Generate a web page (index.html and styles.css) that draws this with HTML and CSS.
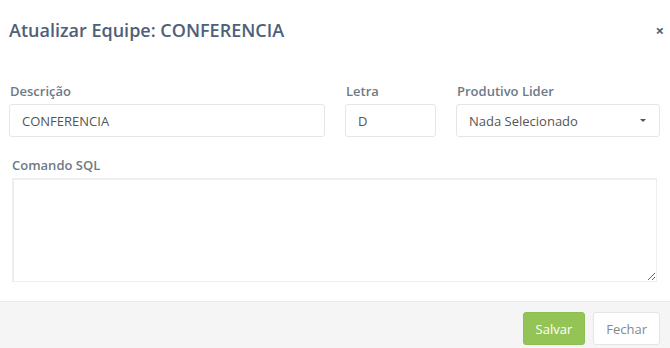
FILE: index.html
```html
<!DOCTYPE html>
<html>
<head>
  <meta charset="utf-8">
  <link rel="stylesheet" href="styles.css">
</head>
<body>

<div class="modal">
  <!-- Cabeçalho -->
  <div class="modal-header">
    <h4 class="modal-title">Atualizar Equipe: CONFERENCIA</h4>
    <span class="close">&times;</span>
  </div>

  <!-- Formulário -->
  <div class="modal-body">
    <div class="row">
      <div class="field">
        <label>Descrição</label>
        <input type="text" class="form-control" value="CONFERENCIA">
      </div>
      <div class="field">
        <label>Letra</label>
        <input type="text" class="form-control" value="D">
      </div>
      <div class="field">
        <label>Produtivo Lider</label>
        <div class="form-control select">
          <span>Nada Selecionado</span>
          <span class="caret"></span>
        </div>
      </div>
    </div>

    <div class="sql-field">
      <label>Comando SQL</label>
      <textarea class="form-control sql"></textarea>
    </div>
  </div>

  <!-- Rodapé -->
  <div class="modal-footer">
    <button class="btn btn-green">Salvar</button>
    <button class="btn btn-default">Fechar</button>
  </div>
</div>

</body>
</html>
```

FILE: styles.css
```css
/* Base */
body {
  margin: 0;
  background: #fff;
  font-family: "Open Sans", "Noto Sans", sans-serif;
  font-size: 13px;
  color: #555;
}
.modal {
  width: 670px;
  height: 348px;
  display: flex;
  flex-direction: column;
}

/* Cabeçalho */
.modal-header {
  display: flex;
  align-items: center;
  justify-content: space-between;
  padding: 18px 6px 0 9px;
}
.modal-title {
  margin: 0;
  font-size: 18px;
  line-height: 24px;
  font-weight: 600;
  color: #4e6078;
}
.close {
  font-size: 15px;
  font-weight: 700;
  line-height: 24px;
  color: #4e6078;
}

/* Formulário */
.modal-body {
  padding: 40px 10px 0 9px;
  flex: 1;
}
.row {
  display: grid;
  grid-template-columns: 316px 91px 204px;
  column-gap: 20px;
}
label {
  display: block;
  font-size: 13px;
  line-height: 18px;
  font-weight: 600;
  color: #6d7a86;
  margin: 0 0 4px 1px;
}
.form-control {
  box-sizing: border-box;
  display: block;
  width: 100%;
  height: 33px;
  padding: 6px 12px;
  border: 1px solid #e5e5e5;
  border-radius: 3px;
  font-family: inherit;
  font-size: 13px;
  color: #555;
  background: #fff;
  outline: none;
}
.select {
  display: flex;
  align-items: center;
  justify-content: space-between;
  padding-right: 13px;
}
.caret {
  width: 0;
  height: 0;
  border-left: 3px solid transparent;
  border-right: 3px solid transparent;
  border-top: 3px solid #555;
}
.sql-field {
  margin: 19px 3px 0 3px;
}
.sql-field label {
  margin-left: 0;
}
.sql {
  height: 104px;
  border-radius: 0;
  resize: vertical;
  border-color: #eee;
  border-width: 2px 1px 1px 2px;
}

/* Rodapé */
.modal-footer {
  height: 47px;
  box-sizing: border-box;
  background: #f5f5f5;
  border-top: 1px solid #eaeaea;
  display: flex;
  align-items: flex-start;
  justify-content: flex-end;
  gap: 8px;
  padding: 10px 10px 0 0;
}
.btn {
  height: 33px;
  padding: 0 12px;
  border-radius: 3px;
  font-family: inherit;
  font-size: 13px;
  cursor: pointer;
}
.btn-green {
  background: #94c456;
  border: 1px solid #8ebd51;
  color: #fff;
}
.btn-default {
  background: #fff;
  border: 1px solid #e5e5e5;
  color: #7f8a94;
}
```
